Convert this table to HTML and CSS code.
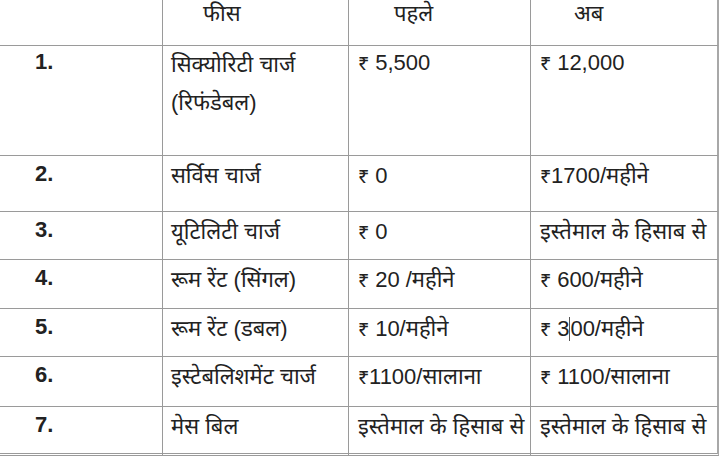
FILE: index.html
```html
<!DOCTYPE html>
<html lang="hi">
<head>
<meta charset="utf-8">
<title>फीस तालिका</title>
<link rel="stylesheet" href="styles.css">
</head>
<body>
<div class="fee-table">
  <div class="cell head c1"></div>
  <div class="cell head c2">फीस</div>
  <div class="cell head c3">पहले</div>
  <div class="cell head c4">अब</div>

  <div class="cell num r1">1.</div>
  <div class="cell txt r1 multi">सिक्योरिटी चार्ज<br>(रिफंडेबल)</div>
  <div class="cell val r1"><span class="rs">₹</span> 5,500</div>
  <div class="cell val r1 last"><span class="rs">₹</span> 12,000</div>

  <div class="cell num">2.</div>
  <div class="cell txt">सर्विस चार्ज</div>
  <div class="cell val"><span class="rs">₹</span> 0</div>
  <div class="cell val last"><span class="rs">₹</span>1700/महीने</div>

  <div class="cell num">3.</div>
  <div class="cell txt">यूटिलिटी चार्ज</div>
  <div class="cell val"><span class="rs">₹</span> 0</div>
  <div class="cell val last">इस्तेमाल के हिसाब से</div>

  <div class="cell num">4.</div>
  <div class="cell txt">रूम रेंट (सिंगल)</div>
  <div class="cell val"><span class="rs">₹</span> 20 /महीने</div>
  <div class="cell val last"><span class="rs">₹</span> 600/महीने</div>

  <div class="cell num">5.</div>
  <div class="cell txt">रूम रेंट (डबल)</div>
  <div class="cell val"><span class="rs">₹</span> 10/महीने</div>
  <div class="cell val last"><span class="rs">₹</span> 3<span class="caret"></span>00/महीने</div>

  <div class="cell num">6.</div>
  <div class="cell txt">इस्टेबलिशमेंट चार्ज</div>
  <div class="cell val"><span class="rs">₹</span>1100/सालाना</div>
  <div class="cell val last"><span class="rs">₹</span> 1100/सालाना</div>

  <div class="cell num end">7.</div>
  <div class="cell txt end">मेस बिल</div>
  <div class="cell val end">इस्तेमाल के हिसाब से</div>
  <div class="cell val end last">इस्तेमाल के हिसाब से</div>
</div>
</body>
</html>
```

FILE: styles.css
```css
html, body {
  margin: 0;
  padding: 0;
  background: #ffffff;
}

body {
  width: 719px;
  height: 456px;
  overflow: hidden;
  color: #222222;
  font-family: "Liberation Sans", "Noto Sans Devanagari", "Lohit Devanagari", "Noto Sans", sans-serif;
}

.fee-table {
  display: grid;
  grid-template-columns: 163px 186px 182px 188px;
  grid-template-rows: 46px 110px 56px 48px 49px 48px 50px 49px;
}

.cell {
  border-right: 1px solid #9a9a9a;
  border-bottom: 1px solid #9a9a9a;
  font-size: 22px;
  line-height: 26px;
  padding-top: 7px;
  white-space: nowrap;
  overflow: hidden;
}

.cell.last {
  border-right: 2px solid #a8a8a8;
}

.cell.end {
  border-bottom: 3px double #9a9a9a;
}

.head {
  padding-top: 1px;
}

.head.c2 { padding-left: 40px; }
.head.c3 { padding-left: 45px; }
.head.c4 { padding-left: 43px; border-right: 2px solid #a8a8a8; }

.num {
  padding-left: 35px;
  font-size: 22px;
  font-weight: bold;
  padding-top: 5px;
}

.num.r1 {
  padding-top: 3px;
}

.txt {
  padding-left: 8px;
}

.val {
  padding-left: 9px;
}

.rs {
  font-size: 20px;
}

.r1 {
  padding-top: 4px;
}

.multi {
  line-height: 38px;
  padding-top: 0;
}

.caret {
  display: inline-block;
  width: 1px;
  height: 24px;
  background: #555555;
  vertical-align: -5px;
}
```
